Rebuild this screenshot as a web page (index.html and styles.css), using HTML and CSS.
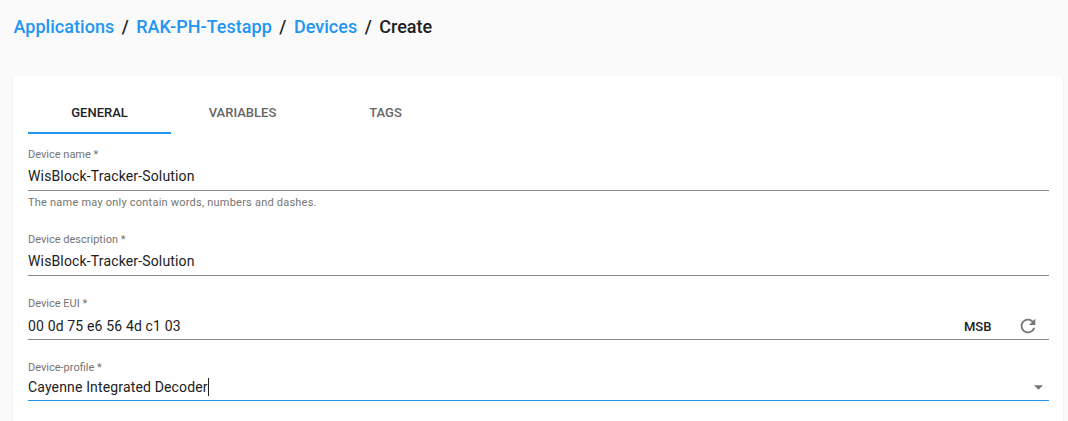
FILE: index.html
```html
<!DOCTYPE html>
<html lang="en">
<head>
<meta charset="utf-8">
<title>Create device</title>
<link rel="stylesheet" href="styles.css">
</head>
<body>
<nav class="breadcrumb">
  <a class="crumb">Applications</a><span class="sep">/</span><a class="crumb">RAK-PH-Testapp</a><span class="sep">/</span><a class="crumb">Devices</a><span class="sep">/</span><span class="current">Create</span>
</nav>
<main class="card">
  <div class="tabs">
    <div class="tab active"><span>GENERAL</span></div>
    <div class="tab"><span>VARIABLES</span></div>
    <div class="tab"><span>TAGS</span></div>
  </div>
  <section class="field field-name">
    <div class="label"><span>Device name *</span></div>
    <div class="control"><span class="value">WisBlock-Tracker-Solution</span></div>
    <div class="hint"><span>The name may only contain words, numbers and dashes.</span></div>
  </section>
  <section class="field field-description">
    <div class="label"><span>Device description *</span></div>
    <div class="control"><span class="value">WisBlock-Tracker-Solution</span></div>
  </section>
  <section class="field field-eui">
    <div class="label"><span>Device EUI *</span></div>
    <div class="control"><span class="value">00 0d 75 e6 56 4d c1 03</span>
      <span class="msb">MSB</span>
      <svg class="refresh" viewBox="0 0 24 24"><path d="M17.65 6.35A7.958 7.958 0 0 0 12 4c-4.42 0-7.99 3.58-7.99 8s3.57 8 7.99 8c3.73 0 6.84-2.55 7.73-6h-2.08A5.99 5.99 0 0 1 12 18c-3.31 0-6-2.69-6-6s2.69-6 6-6c1.66 0 3.14.69 4.22 1.78L13 11h7V4l-2.35 2.35z"/></svg>
    </div>
  </section>
  <section class="field field-profile">
    <div class="label"><span>Device-profile *</span></div>
    <div class="control focused"><span class="value">Cayenne Integrated Decoder</span><span class="caret"></span>
      <svg class="arrow" viewBox="0 0 10 5"><path d="M0 0h10L5 5z"/></svg>
    </div>
  </section>
</main>
</body>
</html>
```
FILE: styles.css
```css
* { box-sizing: border-box; }
body {
  margin: 0;
  background: #fafafa;
  color: #212121;
  font: 14px/20px Roboto, sans-serif;
}
.breadcrumb {
  display: flex;
  height: 76px;
  padding: 15px 0 0 13.5px;
  font-size: 18px;
  line-height: 24px;
  font-weight: 500;
  letter-spacing: .03px;
}
.crumb { color: #2196f3; }
.sep { width: 22px; text-align: center; }
.card {
  width: 1050px;
  height: 345px;
  margin-left: 13px;
  padding: 16px 14px 0 15px;
  background: #fff;
  border-radius: 4px 4px 0 0;
  box-shadow: 0 1px 2px rgba(0, 0, 0, .1);
}
.tabs { display: flex; height: 42px; }
.tab {
  width: 143px;
  text-align: center;
  font-size: 13px;
  line-height: 42px;
  font-weight: 500;
  color: #666;
}
.tab.active { color: #212121; border-bottom: 2px solid #2196f3; }
.field { display: flex; flex-direction: column; }
.field-name { height: 85px; padding-top: 14px; }
.field-description { height: 57px; padding-top: 14px; }
.field-eui { height: 64px; padding-top: 21px; }
.field-profile { height: 61px; padding-top: 21px; }
.label {
  height: 14px;
  font-size: 11px;
  line-height: 14px;
  color: #757575;
}
.control {
  display: flex;
  align-items: center;
  height: 29px;
  border-bottom: 1px solid #8a8a8a;
  white-space: nowrap;
}
.value { letter-spacing: .15px; }
.field-name .value, .field-description .value { margin-top: 1px; margin-bottom: 1px; }
.field-eui .value, .refresh { margin-top: 2px; }
.hint { padding-top: 5px; font-size: 11px; line-height: 14px; letter-spacing: .22px; color: #757575; }
.msb { margin: 4px 0 0 auto; width: 28px; font-size: 13px; font-weight: 500; }
.refresh { width: 22px; height: 22px; margin-right: 10px; margin-left: 25px; fill: #757575; }
.control.focused { height: 26px; border-color: #2196f3; }
.focused .value, .caret { margin-bottom: 2px; }
.caret { width: 1px; height: 18px; background: #212121; }
.arrow { width: 9px; height: 5px; margin: 0 6px 0 auto; fill: #757575; }
```
